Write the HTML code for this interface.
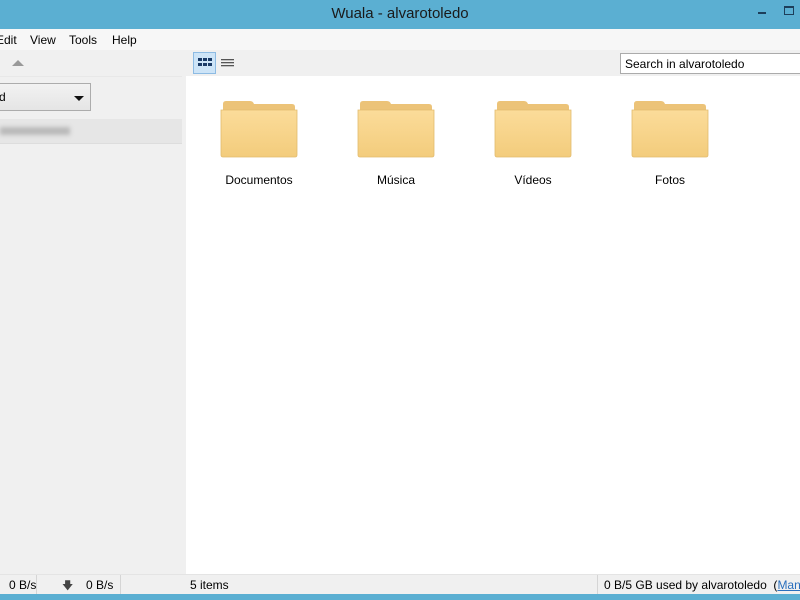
<!DOCTYPE html>
<html><head><meta charset="utf-8"><style>
*{margin:0;padding:0;box-sizing:border-box}
body{width:800px;height:600px;overflow:hidden;background:#f0f0f0;font-family:"Liberation Sans",sans-serif;font-size:12px;color:#000;position:relative}
.abs{position:absolute}
.folder{position:absolute;top:100px;width:78px;height:58px}
.lbl{position:absolute;top:173px;width:120px;text-align:center;font-size:12px}
</style></head><body>
<div class="abs" style="left:0;top:0;width:800px;height:29px;background:#5bafd2"></div>
<div class="abs" style="left:0;top:5px;width:800px;text-align:center;font-size:15px;color:#1a1a1a">Wuala - alvarotoledo</div>
<div class="abs" style="left:758px;top:12px;width:8px;height:2px;background:#1d3e5a"></div>
<div class="abs" style="left:784px;top:6px;width:10px;height:9px;border:1px solid #1d3e5a;border-top-width:2px"></div>
<div class="abs" style="left:0;top:29px;width:800px;height:21px;background:#f7f7f7"></div>
<div class="abs" style="left:-4px;top:33px;font-size:12px;word-spacing:0">Edit</div>
<div class="abs" style="left:30px;top:33px">View</div>
<div class="abs" style="left:69px;top:33px">Tools</div>
<div class="abs" style="left:112px;top:33px">Help</div>
<div class="abs" style="left:12px;top:60px;width:0;height:0;border-left:6px solid transparent;border-right:6px solid transparent;border-bottom:6px solid #999"></div>
<div class="abs" style="left:193px;top:52px;width:23px;height:22px;background:#cde4f7;border:1px solid #8dbbe3"></div>
<svg class="abs" style="left:198px;top:58px" width="14" height="9"><g fill="#1a3a66"><rect x="0" y="0" width="4" height="3"/><rect x="5" y="0" width="4" height="3"/><rect x="10" y="0" width="4" height="3"/><rect x="0" y="5" width="4" height="3"/><rect x="5" y="5" width="4" height="3"/><rect x="10" y="5" width="4" height="3"/></g></svg>
<svg class="abs" style="left:221px;top:59px" width="13" height="8"><g fill="#555"><rect y="0" width="13" height="1.3"/><rect y="3" width="13" height="1.3"/><rect y="6" width="13" height="1.3"/></g></svg>
<div class="abs" style="left:620px;top:53px;width:190px;height:21px;background:#fff;border:1px solid #ababab;padding:3px 4px">Search in alvarotoledo</div>
<div class="abs" style="left:-2px;top:83px;width:93px;height:28px;border:1px solid #acacac;background:linear-gradient(#f2f2f2,#e5e5e5);padding:6px 0 0 0">d</div>
<div class="abs" style="left:74px;top:96px;width:0;height:0;border-left:5px solid transparent;border-right:5px solid transparent;border-top:5px solid #111"></div>
<div class="abs" style="left:0;top:119px;width:182px;height:25px;background:#e6e6e6;border-bottom:1px solid #ddd"></div>
<div class="abs" style="left:0;top:127px;width:70px;height:8px;background:#b9b9b9;filter:blur(2px)"></div>
<div class="abs" style="left:0;top:76px;width:182px;height:1px;background:#e8e8e8"></div>
<div class="abs" style="left:186px;top:76px;width:614px;height:498px;background:#fff"></div>
<div class="abs" style="left:182px;top:76px;width:4px;height:498px;background:#f0f0f0"></div>
<svg width="0" height="0" style="position:absolute"><defs><linearGradient id="g" x1="0" y1="0" x2="0" y2="1"><stop offset="0" stop-color="#fbdc9a"/><stop offset="1" stop-color="#f3cc7c"/></linearGradient></defs></svg>
<svg class="folder" style="left:220px" viewBox="0 0 78 58"><path d="M3 4 Q3 1 6 1 H30 Q33 1 34 4 H72 Q75 4 75 7 V12 H3Z" fill="#ecc378"/><path d="M1 10 H77 V55 Q77 57 75 57 H3 Q1 57 1 55Z" fill="url(#g)" stroke="#e2bb6e" stroke-width="0.8"/></svg>
<svg class="folder" style="left:357px" viewBox="0 0 78 58"><path d="M3 4 Q3 1 6 1 H30 Q33 1 34 4 H72 Q75 4 75 7 V12 H3Z" fill="#ecc378"/><path d="M1 10 H77 V55 Q77 57 75 57 H3 Q1 57 1 55Z" fill="url(#g)" stroke="#e2bb6e" stroke-width="0.8"/></svg>
<svg class="folder" style="left:494px" viewBox="0 0 78 58"><path d="M3 4 Q3 1 6 1 H30 Q33 1 34 4 H72 Q75 4 75 7 V12 H3Z" fill="#ecc378"/><path d="M1 10 H77 V55 Q77 57 75 57 H3 Q1 57 1 55Z" fill="url(#g)" stroke="#e2bb6e" stroke-width="0.8"/></svg>
<svg class="folder" style="left:631px" viewBox="0 0 78 58"><path d="M3 4 Q3 1 6 1 H30 Q33 1 34 4 H72 Q75 4 75 7 V12 H3Z" fill="#ecc378"/><path d="M1 10 H77 V55 Q77 57 75 57 H3 Q1 57 1 55Z" fill="url(#g)" stroke="#e2bb6e" stroke-width="0.8"/></svg>
<div class="lbl" style="left:199px">Documentos</div>
<div class="lbl" style="left:336px">Música</div>
<div class="lbl" style="left:473px">Vídeos</div>
<div class="lbl" style="left:610px">Fotos</div>
<div class="abs" style="left:0;top:574px;width:800px;height:20px;background:#f0f0f0;border-top:1px solid #e4e4e4"></div>
<div class="abs" style="left:9px;top:578px">0 B/s</div>
<div class="abs" style="left:36px;top:575px;width:1px;height:19px;background:#d5d5d5"></div>
<div class="abs" style="left:62px;top:577px;font-size:11px;color:#444">&#129095;</div>
<div class="abs" style="left:86px;top:578px">0 B/s</div>
<div class="abs" style="left:120px;top:575px;width:1px;height:19px;background:#d5d5d5"></div>
<div class="abs" style="left:190px;top:578px">5 items</div>
<div class="abs" style="left:597px;top:575px;width:1px;height:19px;background:#d5d5d5"></div>
<div class="abs" style="left:604px;top:578px;white-space:nowrap">0 B/5 GB used by alvarotoledo&nbsp; (<span style="color:#2a6fbd;text-decoration:underline">Manage</span>)</div>
<div class="abs" style="left:0;top:594px;width:800px;height:6px;background:#5bafd2"></div>
</body></html>
